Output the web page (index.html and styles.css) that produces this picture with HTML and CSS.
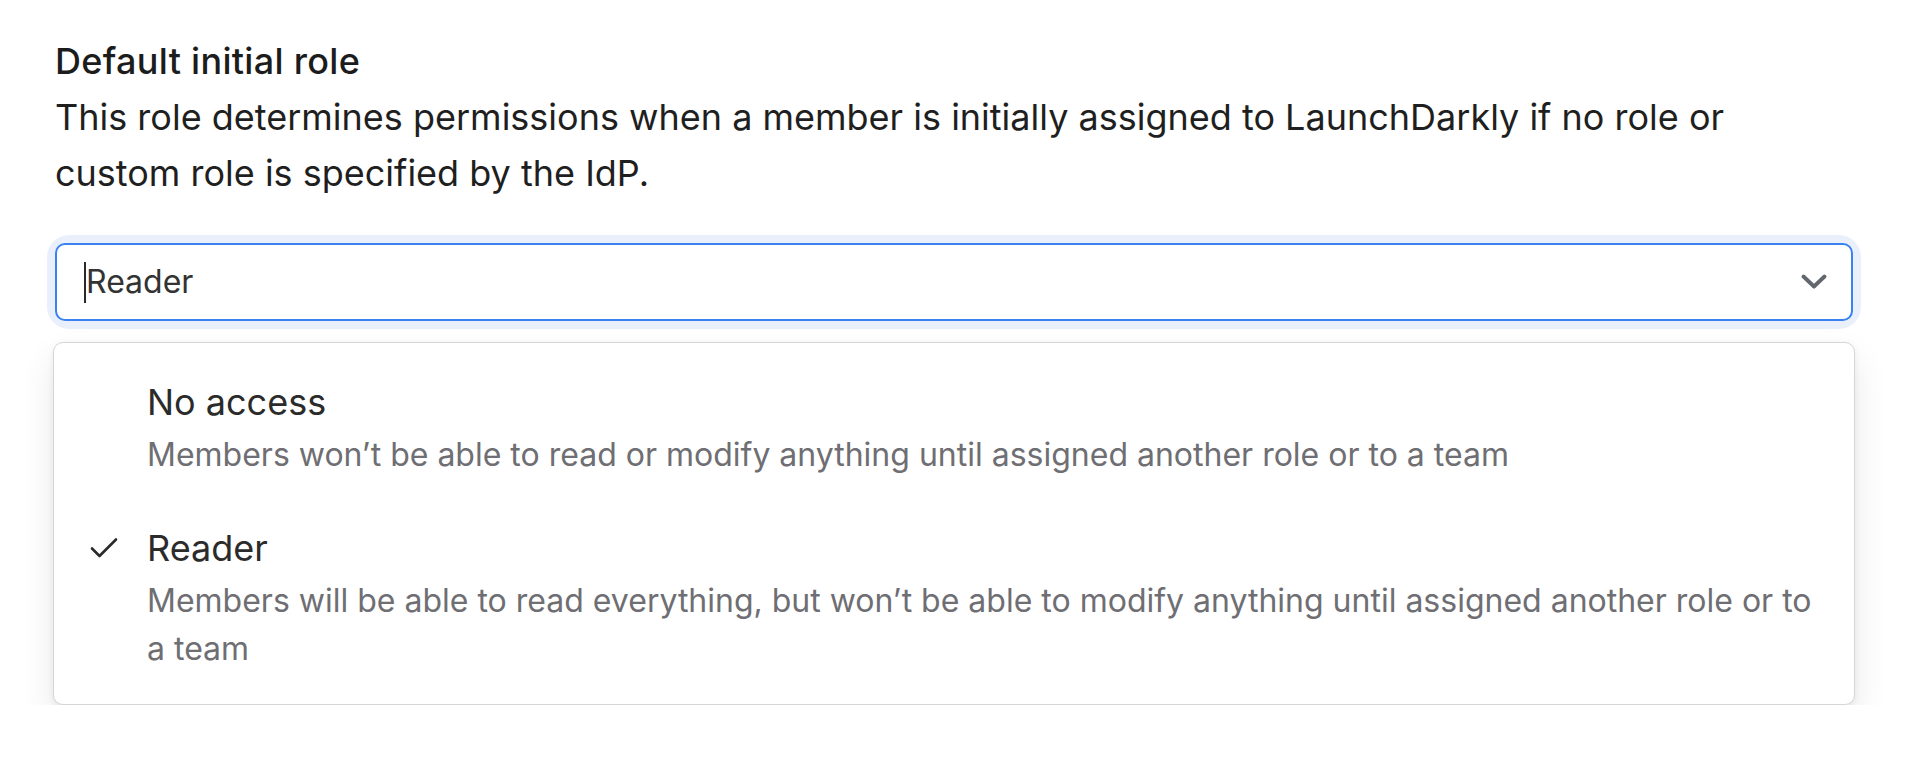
FILE: index.html
```html
<!DOCTYPE html>
<html lang="en">
<head>
<meta charset="utf-8">
<title>Default initial role</title>
<link rel="stylesheet" href="styles.css">
</head>
<body>
<main class="page">
  <section class="field">
    <h2 class="field-title">Default initial role</h2>
    <p class="field-desc">This role determines permissions when a member is initially assigned to LaunchDarkly if no role or custom role is specified by the IdP.</p>
    <div class="select-wrap">
      <div class="select">
        <span class="caret"></span>
        <span class="select-value">Reader</span>
        <svg class="chevron" width="26" height="16" viewBox="0 0 26 16" aria-hidden="true">
          <path d="M2.5 2.5 L13 12.5 L23.5 2.5" fill="none" stroke="#62666d" stroke-width="3.8" stroke-linecap="round" stroke-linejoin="round"/>
        </svg>
      </div>
    </div>
    <ul class="menu" role="listbox">
      <li class="option">
        <span class="check"></span>
        <div class="option-text">
          <div class="option-label">No access</div>
          <div class="option-desc">Members won’t be able to read or modify anything until assigned another role or to a team</div>
        </div>
      </li>
      <li class="option selected">
        <span class="check">
          <svg width="28" height="22" viewBox="0 0 28 22" aria-hidden="true">
            <path d="M2 11.5 L9.5 19 L26 2.5" fill="none" stroke="#2a2a2a" stroke-width="2.6" stroke-linecap="round" stroke-linejoin="round"/>
          </svg>
        </span>
        <div class="option-text">
          <div class="option-label">Reader</div>
          <div class="option-desc">Members will be able to read everything, but won’t be able to modify anything until assigned another role or to a team</div>
        </div>
      </li>
    </ul>
  </section>
</main>
</body>
</html>
```

FILE: styles.css
```css
* { box-sizing: border-box; }

html, body {
  margin: 0;
  padding: 0;
  background: #ffffff;
}

body {
  font-family: Inter, "Noto Sans", "Liberation Sans", sans-serif;
  color: #1f1f1f;
}

.page {
  padding: 33px 67px 0 55px;
}

.field-title {
  margin: 0;
  font-size: 36px;
  line-height: 56px;
  font-weight: 500;
  letter-spacing: 0.3px;
  color: #1c1c1c;
}

.field-desc {
  margin: 0;
  font-size: 36px;
  line-height: 56px;
  font-weight: 400;
  color: #1f1f1f;
}

.select-wrap {
  margin-top: 42px;
  border-radius: 14px;
  box-shadow: 0 0 0 8px #e9f0fc;
}

.select {
  height: 78px;
  display: flex;
  align-items: center;
  padding: 0 24px 0 27px;
  border: 2px solid #3a82f0;
  border-radius: 10px;
  background: #fff;
}

.caret {
  width: 2px;
  height: 41px;
  background: #2a2a2a;
}

.select-value {
  flex: 1;
  font-size: 32px;
  color: #333333;
  line-height: 40px;
}

.chevron {
  display: block;
}

.menu {
  list-style: none;
  margin: 21px -2px 0;
  padding: 9px 0 12px;
  background: #fff;
  border: 1px solid #d6d6d6;
  border-radius: 10px;
  box-shadow: 0 16px 36px rgba(0, 0, 0, 0.09), 0 2px 6px rgba(0, 0, 0, 0.07);
}

.option {
  display: flex;
  padding: 23px 40px 19px 36px;
}

.check {
  flex: 0 0 57px;
  height: 54px;
  display: flex;
  align-items: center;
}

.check svg { display: block; }

.option-label {
  font-size: 36px;
  line-height: 54px;
  color: #2b2b2b;
}

.option-desc {
  margin-top: 2px;
  font-size: 32px;
  line-height: 48px;
  color: #6e6e73;
}
```
